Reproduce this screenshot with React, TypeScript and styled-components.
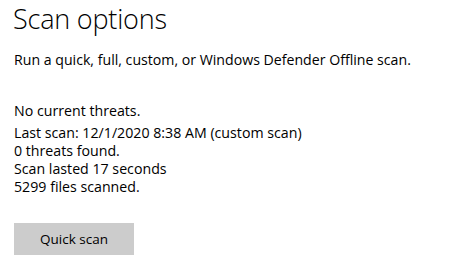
import { FC } from "react"
import styled, { createGlobalStyle } from "styled-components"

const GlobalStyle = createGlobalStyle`
  html, body {
    margin: 0;
    padding: 0;
    background: #ffffff;
  }
  body {
    font-family: "Open Sans", "Noto Sans", "Liberation Sans", sans-serif;
    color: #000000;
  }
`

const Page = styled.div`
  width: 449px;
  height: 269px;
  padding: 0 14px;
  box-sizing: border-box;
  display: flex;
  flex-direction: column;
  align-items: flex-start;
`

const Title = styled.h1`
  margin: 3px 0 0 -1px;
  font-size: 27px;
  font-weight: 300;
  line-height: 32px;
  letter-spacing: -0.2px;
`

const Description = styled.p`
  margin: 15px 0 0;
  font-size: 14.15px;
  line-height: 20px;
`

const Status = styled.div`
  margin-top: 32px;
  display: flex;
  flex-direction: column;
  font-size: 14.2px;
  line-height: 18px;
`

const StatusLine = styled.span<{ $gapAfter?: number }>`
  margin-bottom: ${(p) => p.$gapAfter ?? 0}px;
`

const QuickScanButton = styled.button`
  margin-top: 27px;
  width: 120px;
  height: 32px;
  border: none;
  background: #cccccc;
  color: #000000;
  font-family: inherit;
  font-size: 13.5px;
  padding: 0;
  cursor: pointer;
`

const App: FC = () => {
  return (
    <Page>
      <GlobalStyle />
      <Title>Scan options</Title>
      <Description>Run a quick, full, custom, or Windows Defender Offline scan.</Description>
      <Status>
        <StatusLine $gapAfter={4}>No current threats.</StatusLine>
        <StatusLine>Last scan: 12/1/2020 8:38 AM (custom scan)</StatusLine>
        <StatusLine>0 threats found.</StatusLine>
        <StatusLine>Scan lasted 17 seconds</StatusLine>
        <StatusLine>5299 files scanned.</StatusLine>
      </Status>
      <QuickScanButton>Quick scan</QuickScanButton>
    </Page>
  )
}

export default App
